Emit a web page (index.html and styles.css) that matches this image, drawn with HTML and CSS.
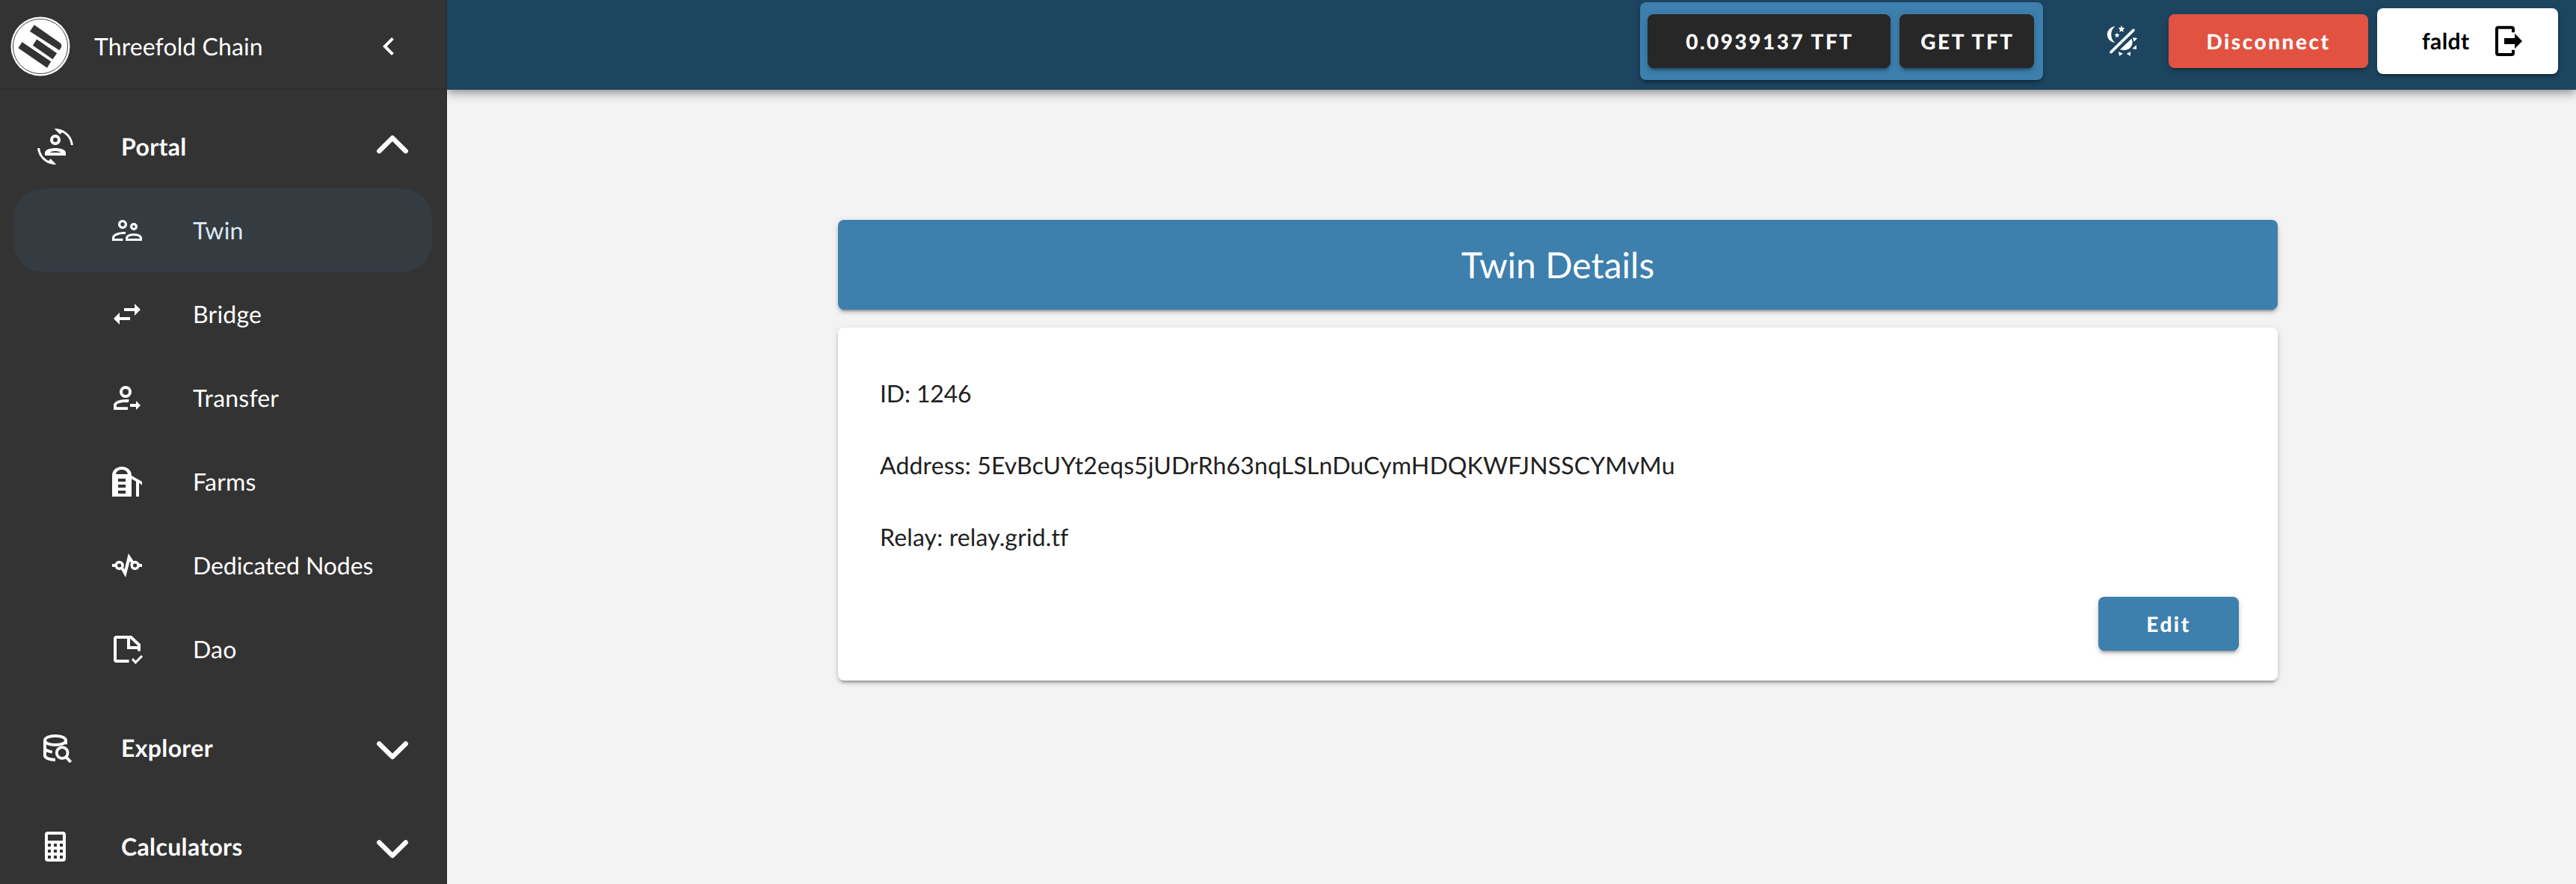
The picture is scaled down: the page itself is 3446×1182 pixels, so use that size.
FILE: index.html
```html
<!DOCTYPE html>
<html lang="en">
<head>
<meta charset="utf-8">
<title>Threefold Chain</title>
<link rel="stylesheet" href="styles.css">
</head>
<body>
<div class="app">
  <nav class="sidebar">
    <div class="brand">
      <svg class="logo" viewBox="0 0 80 80">
        <circle cx="40" cy="40" r="39.5" fill="#fff"/>
        <circle cx="40" cy="40" r="36.6" fill="none" stroke="#444" stroke-width="1"/>
        <path fill="#333" d="M31.8 11.2 66.6 35.4Q69 37.5 68.2 40.5L65.5 45.2 26 19.9ZM35.2 30.5 62.2 49.2 56.5 57.2 29.8 38.8ZM15.6 34.2 54.2 60.2 49 68.8 10.4 42.2Z"/>
      </svg>
      <span class="brand-name">Threefold Chain</span>
      <svg class="icon" viewBox="0 0 24 24"><path d="M15.41 16.58 10.83 12l4.58-4.59L14 6l-6 6 6 6z"/></svg>
    </div>
    <div class="groups">
      <div class="group">
        <div class="group-head">
          <svg class="icon" viewBox="0 0 24 24"><path d="M7.5 21.5C4.25 19.94 1.91 16.76 1.55 13H.05C.56 19.16 5.71 24 12 24l.66-.03-3.81-3.81zM16.5 2.5c3.27 1.54 5.61 4.71 5.95 8.5h1.5C23.44 4.84 18.29 0 12 0l-.66.03 3.81 3.81z"/><path fill-rule="evenodd" d="M12 4a3.5 3.5 0 1 1 0 7 3.5 3.5 0 0 1 0-7m0 2a1.5 1.5 0 1 0 0 3 1.5 1.5 0 0 0 0-3M5 16.2C5 14 8.7 13 12 13s7 1 7 3.200V18H5zm3.200-.2h7.600c-.8-.6-2.400-1-3.800-1s-3 .4-3.800 1"/></svg>
          <span class="group-name">Portal</span>
          <svg class="caret" viewBox="0 0 48 32"><path d="M6.300 25 24 7.500 41.700 25"/></svg>
        </div>
        <a class="item active">
          <svg class="icon line" viewBox="0 0 24 24"><circle cx="9" cy="8" r="2.200" stroke-width="1.700"/><circle cx="16.500" cy="9.500" r="1.700" stroke-width="1.600"/><path stroke-width="1.500" d="M11 13.800C7 13.400 2.750 15 2.750 17V18.250H9.200M11.750 18.250V17.400C11.750 14 21.250 14 21.250 17.400V18.250Z"/></svg>
          <span>Twin</span></a>
        <a class="item">
          <svg class="icon" viewBox="0 0 24 24"><path d="M21 9l-4-4v3h-7v2h7v3M7 11l-4 4 4 4v-3h7v-2H7z"/></svg>
          <span>Bridge</span></a>
        <a class="item">
          <svg class="icon" viewBox="0 0 24 24"><path fill-rule="evenodd" d="M11 4a4 4 0 1 1 0 8 4 4 0 0 1 0-8m0 2a2 2 0 1 0 0 4 2 2 0 0 0 0-4M13.500 13.200C9 12.500 3 13.800 3 17v3h9.500v-1.900H4.900V17c0-1.200 3.600-2.300 7.800-1.900zM18 14l3 3-3 3v-2h-4v-2h4z"/></svg>
          <span>Transfer</span></a>
        <a class="item">
          <svg class="icon" viewBox="0 0 24 24"><path fill-rule="evenodd" d="M2 22V8C2 0 15 0 15 8l7 4v2.200l-2-1.200V22h-2V11.900l-3-1.800V22zM4.500 7h8c-.8-4-7.200-4-8 0M6 10v2h5v-2zm0 4v2h5v-2zm0 4v2h5v-2z"/></svg>
          <span>Farms</span></a>
        <a class="item wide">
          <svg class="icon line" viewBox="0 0 24 24"><circle cx="6.800" cy="12" r="2.200" stroke-width="1.800"/><circle cx="17.300" cy="12" r="2.200" stroke-width="1.800"/><path stroke-width="1.900" d="M2 12h2.700M19.500 12H22"/><path class="solid" d="M8 14.600 9.300 13.300 10.300 14.600 12.900 4 16.400 9.200 14.900 10.700 13.800 9.200 11 20Z"/></svg>
          <span>Dedicated Nodes</span></a>
        <a class="item">
          <svg class="icon line" viewBox="0 0 24 24"><path stroke-width="2" d="M13.300 20H5a1 1 0 0 1-1-1V5a1 1 0 0 1 1-1h9.600L20 9.100V13.200M13 4v7h7"/><path stroke-width="1.600" d="M15.500 18.600 17.700 20.900 22 16.500"/></svg>
          <span>Dao</span></a>
      </div>
      <div class="group">
        <div class="group-head">
          <svg class="icon line" viewBox="0 0 24 24"><path stroke-width="2" d="M5 7c0-4 14-4 14 0S5 11 5 7v10c0 1.900 3.300 3 7 3M5 12c0 1.300 2 2.300 4.900 2.800M19 7v2.600"/><circle cx="16.600" cy="15.300" r="3.700" stroke-width="1.900"/><path stroke-width="2" d="M19 17.800 22.300 21.500"/></svg>
          <span class="group-name">Explorer</span>
          <svg class="caret" viewBox="0 0 48 32"><path d="M6.300 7.500 24 25 41.700 7.500"/></svg>
        </div>
      </div>
      <div class="group">
        <div class="group-head">
          <svg class="icon" viewBox="0 0 24 24"><path d="M7,2H17A2,2 0 0,1 19,4V20A2,2 0 0,1 17,22H7A2,2 0 0,1 5,20V4A2,2 0 0,1 7,2M7,4V8H17V4H7M7,10V12H9V10H7M11,10V12H13V10H11M15,10V12H17V10H15M7,14V16H9V14H7M11,14V16H13V14H11M15,14V16H17V14H15M7,18V20H9V18H7M11,18V20H13V18H11M15,18V20H17V18H15Z"/></svg>
          <span class="group-name">Calculators</span>
          <svg class="caret" viewBox="0 0 48 32"><path d="M6.300 7.500 24 25 41.700 7.500"/></svg>
        </div>
      </div>
    </div>
  </nav>
  <div class="page">
    <header class="topbar">
      <div class="wallet">
        <button class="btn dark balance">0.0939137 TFT</button>
        <button class="btn dark get">GET TFT</button>
      </div>
      <svg class="theme" viewBox="0 0 210 210"><path stroke="#fff" stroke-width="11" stroke-linecap="round" d="M54 149 144 61"/><path fill="#fff" d="M71 45C47 50 37 65 39 82c2 16 14 29 31 28C50 97 49 61 71 45M96 42l4 9 9 1-7 7 2 10-8-5-8 5 2-10-7-7 9-1zM78 71l3 6 7 1-5 5 1 7-6-3-6 3 1-7-5-5 7-1zM90 139 136 95C149 116 129 151 90 139M141 91l19 2-14 14zM156 121v17l-17-3zM84 147l18 8-15 9zM132 147v17l-16-8z"/></svg>
      <div class="session">
        <button class="btn danger">Disconnect</button>
        <div class="account">
          <span>faldt</span>
          <svg class="exit" viewBox="0 0 210 210"><path fill="none" stroke="#000" stroke-width="12" d="M126 70V56Q126 50 120 50H66Q60 50 60 56V153Q60 159 66 159H120Q126 159 126 153V140"/><path d="M90 93h42V74l30 31-30 30v-18H90z"/></svg>
        </div>
      </div>
    </header>
    <main class="content">
      <h1 class="title">Twin Details</h1>
      <section class="card">
        <p class="short">ID: 1246</p>
        <p>Address: 5EvBcUYt2eqs5jUDrRh63nqLSLnDuCymHDQKWFJNSSCYMvMu</p>
        <p>Relay: relay.grid.tf</p>
        <button class="btn edit">Edit</button>
      </section>
    </main>
  </div>
</div>
</body>
</html>
```
FILE: styles.css
```css
* { box-sizing: border-box; }

body {
  margin: 0;
  font-family: Lato, sans-serif;
  font-size: 32px;
  text-rendering: geometricPrecision;
  background: #f3f3f3;
  color: #212121;
}

.app {
  display: flex;
  height: 1182px;
  overflow: hidden;
}

/* Sidebar */
.sidebar {
  position: relative;
  z-index: 2;
  flex: 0 0 598px;
  overflow: hidden;
  background: #333;
  border-right: 2px solid #2d2d2d;
  color: #fff;
}

.brand {
  display: flex;
  align-items: center;
  height: 120px;
  padding: 6px 52px 0 14px;
  border-bottom: 2px solid #2d2d2d;
}

.logo { width: 80px; height: 80px; margin-right: 32px; }
.brand-name { flex: 1; line-height: 40px; letter-spacing: .1px; }

.icon { display: block; flex: none; width: 48px; height: 48px; fill: currentColor; }
.line { fill: none; stroke: currentColor; }
.solid { fill: currentColor; stroke: none; }

.groups {
  display: flex;
  flex-direction: column;
  gap: 20px;
  padding: 20px 18px 0;
}

.group-head {
  display: flex;
  align-items: center;
  height: 112px;
  padding: 0 29px 0 32px;
  font-weight: 700;
}

.group-name { flex: 1; margin-left: 64px; line-height: 40px; letter-spacing: .35px; }

.caret {
  width: 48px;
  height: 32px;
  margin-top: -6px;
  fill: none;
  stroke: #fff;
  stroke-width: 6.5;
  stroke-linecap: round;
  stroke-linejoin: round;
}

.group + .group .caret { margin-top: 6px; }

.item {
  display: flex;
  align-items: center;
  gap: 64px;
  height: 112px;
  padding-left: 128px;
  border-radius: 40px;
  line-height: 40px;
  letter-spacing: .2px;
}

.wide { letter-spacing: -.1px; }
.active { background: #343b41; }
.active span { color: #dfe9f3; }

/* Top bar */
.page { flex: 1; min-width: 0; }

.topbar {
  display: flex;
  justify-content: flex-end;
  height: 120px;
  padding-right: 24px;
  background: #1d4560;
  box-shadow: 0 4px 8px -2px rgba(0,0,0,.2), 0 8px 10px rgba(0,0,0,.14), 0 2px 20px rgba(0,0,0,.12);
}

.wallet {
  display: flex;
  align-items: center;
  gap: 12px;
  width: 539px;
  height: 104px;
  margin-top: 3px;
  padding: 0 10px;
  border-radius: 8px;
  background: #3d7fad;
}

.btn {
  height: 72px;
  padding: 0;
  border: 0;
  border-radius: 8px;
  color: #fff;
  font: 900 28px Lato, sans-serif;
  letter-spacing: 2.5px;
  text-rendering: geometricPrecision;
}

.wallet, .btn, .account, .title, .card {
  box-shadow: 0 6px 2px -4px rgba(0,0,0,.2), 0 4px 4px rgba(0,0,0,.14), 0 2px 10px rgba(0,0,0,.12);
}

.dark { padding-left: 2px; background: #272727; }
.balance { width: 325px; }
.get { width: 180px; }

.theme { width: 70px; height: 70px; margin: 20px 25px 0 73px; }

.session {
  display: flex;
  align-items: center;
  gap: 12px;
  height: 110px;
}

.danger { width: 267px; background: #e25241; }

.account {
  display: flex;
  align-items: center;
  width: 242px;
  height: 88px;
  padding-left: 60px;
  border-radius: 8px;
  background: #fff;
  color: #000;
  font-weight: 700;
  font-size: 30px;
}

.account span { width: 80px; letter-spacing: .4px; }
.exit { width: 70px; height: 70px; }

/* Content */
.content {
  width: 1926px;
  margin: 174px auto 0 523px;
}

.title {
  height: 120px;
  margin: 0 0 24px;
  border-radius: 8px;
  background: #3d7fad;
  color: #fff;
  font-weight: 400;
  font-size: 48px;
  line-height: 122px;
  text-align: center;
}

.card {
  display: flex;
  flex-direction: column;
  height: 472px;
  padding: 64px 52px 40px 56px;
  border-radius: 8px;
  background: #fff;
}

.card p {
  margin: 0 0 48px;
  line-height: 48px;
  letter-spacing: .14px;
}

.card .short { letter-spacing: -.15px; }

.edit {
  align-self: flex-end;
  width: 188px;
  margin-top: 8px;
  background: #3d7fad;
}
```
